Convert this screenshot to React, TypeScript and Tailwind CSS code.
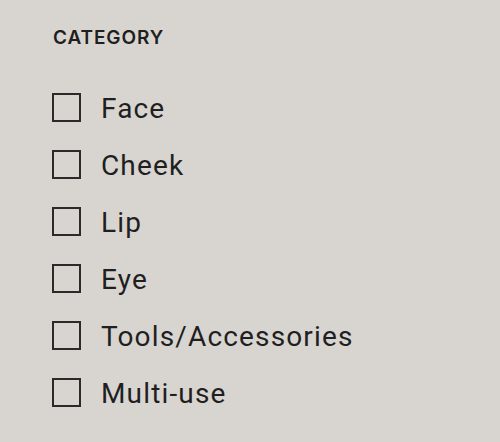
import React from "react";

const items = ["Face", "Cheek", "Lip", "Eye", "Tools/Accessories", "Multi-use"];

export default function App() {
  return (
    <div className="w-[500px] h-[442px] bg-[#d8d5d1] text-[#1f1f1f] pl-[53px] pt-[26px]" style={{ fontFamily: "Roboto, Inter, 'Liberation Sans', sans-serif" }}>
      <div className="text-[19px] font-semibold leading-[24px] tracking-[0.9px]" style={{ fontFamily: "Inter, Roboto, sans-serif" }}>CATEGORY</div>
      <div className="mt-[43px] flex flex-col gap-[28px]">
        {items.map((t) => (
          <label key={t} className="flex items-center h-[29px]">
            <span className="w-[29px] h-[29px] border-2 border-[#2a2a2a] shrink-0 -ml-px" />
            <span className="ml-[20px] text-[28px] leading-[29px] tracking-[1.15px] pt-[1px]">{t}</span>
          </label>
        ))}
      </div>
    </div>
  );
}
